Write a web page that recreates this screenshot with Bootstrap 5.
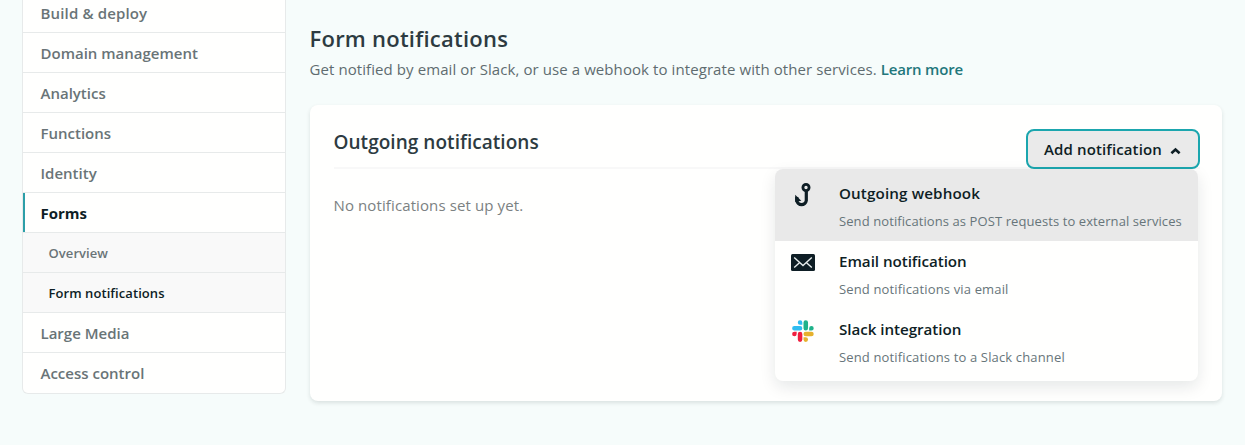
<!DOCTYPE html>
<html lang="en">
<head>
<meta charset="utf-8">
<meta name="viewport" content="width=device-width, initial-scale=1">
<title>Form notifications</title>
<link href="https://cdn.jsdelivr.net/npm/bootstrap@5.3.0/dist/css/bootstrap.min.css" rel="stylesheet">
<style>
body{background:#f6fcfb;font-family:"Open Sans","Noto Sans",sans-serif;font-size:15px;line-height:24px;color:#2d3b41;height:445px;overflow:hidden}
.side-nav{width:264px;height:394px;margin-left:22px;background:#fffffe;border:1px solid #e7eaea;border-top:0;border-radius:0 0 6px 6px;overflow:hidden}
.side-nav .nav-link{height:40px;padding:0 0 0 17.500px;line-height:41px;border-bottom:1px solid #e7eaea;color:#697477;font-weight:600}
.side-nav .nav-link:first-child{height:33px;line-height:26px;letter-spacing:.15px}
.side-nav .nav-link:last-child{border-bottom:0}
.side-nav .nav-link.active{color:#0e1e25;font-weight:700;box-shadow:inset 2px 0 #2c9fa8}
.side-nav .sub-link{background:#f9f9f9;padding-left:25.500px;font-size:13px;letter-spacing:.07px}
.side-nav .sub-link.current{color:#0e1e25}
.main-col{margin-left:24px;width:912px;padding-top:22px}
.page-title{font-size:22px;line-height:32px;font-weight:600;letter-spacing:.24px;margin:0 0 0 -.5px}
.page-text{color:#5f6c70;letter-spacing:.085px;margin:3px 0 24px -.5px}
.page-text a{color:#22777b;font-weight:600;letter-spacing:-.17px;text-decoration:none}
.panel{height:296px;padding:24px 22px 24px 24px;background:#fffffe;border-radius:8px;box-shadow:0 2px 4px rgba(14,30,37,.12)}
.panel-head{height:40px;border-bottom:2px solid #f8f8f8}
.panel-title{font-size:19px;line-height:26px;font-weight:600;letter-spacing:.04px;margin:0 0 0 -.5px}
.add-btn{width:174px;height:40px;background:#eaeaea!important;border:2px solid #1ba6ae!important;border-radius:8px;padding:0 17px 0 16px;font-size:15px;font-weight:600;letter-spacing:.13px;color:#0e1e25!important}
.empty-text{color:#7b8182;letter-spacing:.11px;margin:24px 0 0 -.5px}
.add-menu{width:423px;height:212px;top:40px;right:2px;border:0;border-radius:8px;padding:0;background:#fffffe;box-shadow:0 6px 16px rgba(14,30,37,.1);overflow:hidden}
.add-menu .dropdown-item{height:68px;padding:8px 0 0 16px;color:#0e1e25}
.add-menu .dropdown-item.hovered{height:72px;padding-top:12px;background:#e9e9e9}
.add-menu svg{flex:none;margin-top:1px}
.item-title{font-size:15.200px;font-weight:600;line-height:24px;letter-spacing:-.05px}
.hovered .item-title{letter-spacing:.13px}
.item-text{font-size:13px;line-height:32px;letter-spacing:.15px;color:#67757a}
.hovered .item-text{letter-spacing:.09px}
</style>
</head>
<body>
<div class="d-flex align-items-start">
  <nav class="side-nav nav flex-column flex-nowrap flex-shrink-0">
    <a class="nav-link">Build &amp; deploy</a>
    <a class="nav-link">Domain management</a>
    <a class="nav-link">Analytics</a>
    <a class="nav-link">Functions</a>
    <a class="nav-link">Identity</a>
    <a class="nav-link active">Forms</a>
    <a class="nav-link sub-link">Overview</a>
    <a class="nav-link sub-link current">Form notifications</a>
    <a class="nav-link">Large Media</a>
    <a class="nav-link">Access control</a>
  </nav>
  <main class="main-col flex-shrink-0">
    <h1 class="page-title">Form notifications</h1>
    <p class="page-text">Get notified by email or Slack, or use a webhook to integrate with other services. <a href="#">Learn more</a></p>
    <section class="panel">
      <div class="panel-head d-flex justify-content-between align-items-start">
        <h2 class="panel-title">Outgoing notifications</h2>
        <div class="dropdown">
          <button class="btn add-btn d-flex align-items-center justify-content-between" type="button"><span>Add notification</span>
            <svg width="11" height="8" viewBox="0 0 11 8" class="mt-1"><path d="M1.400 6.200 5.500 2.500 9.600 6.200" fill="none" stroke="#0e1e25" stroke-width="2.600"/></svg></button>
          <div class="dropdown-menu add-menu show">
            <a class="dropdown-item hovered d-flex gap-4" href="#">
              <svg width="24" height="27" viewBox="0 0 24 27"><circle cx="15" cy="5.500" r="3.100" fill="none" stroke="#0e1e25" stroke-width="2.800"/><path d="M15.300 8.500V18.500a4.800 4.800 0 0 1-9.500 0V15" fill="none" stroke="#0e1e25" stroke-width="3.200"/><path d="M4.200 12.800 10.300 18.700 4.200 20z" fill="#0e1e25"/></svg>
              <div><div class="item-title">Outgoing webhook</div><div class="item-text">Send notifications as POST requests to external services</div></div>
            </a>
            <a class="dropdown-item d-flex gap-4" href="#">
              <svg width="24" height="26" viewBox="0 0 24 26"><rect y="4" width="24" height="17" rx="1.500" fill="#0e1e25"/><path d="M3.200 7.500 12 15.500l8.800-8M3.200 17.500l5-4.500M20.800 17.500l-5-4.500" fill="none" stroke="#e8eeee" stroke-width="1.400"/></svg>
              <div><div class="item-title">Email notification</div><div class="item-text">Send notifications via email</div></div>
            </a>
            <a class="dropdown-item d-flex gap-4" href="#">
              <svg width="24" height="26" viewBox="0 0 24 26"><g transform="translate(1.100 2.600) scale(.172)"><path d="M26.500 77.600a13.200 13.200 0 1 1-13.200-13.200h13.200zM33.100 77.600a13.200 13.200 0 0 1 26.400 0v33a13.200 13.200 0 0 1-26.400 0z" fill="#f0203f"/><path d="M46.300 24.600a13.200 13.200 0 1 1 13.200-13.200v13.200zM46.300 31.200a13.200 13.200 0 0 1 0 26.400h-33a13.200 13.200 0 0 1 0-26.400z" fill="#2fbcf0"/><path d="M99.300 44.400a13.200 13.200 0 1 1 13.200 13.200H99.300zM92.700 44.400a13.200 13.200 0 0 1-26.400 0v-33a13.200 13.200 0 0 1 26.400 0z" fill="#1fb28a"/><path d="M79.500 97.400a13.200 13.200 0 1 1-13.200 13.200V97.400zM79.500 90.800a13.200 13.200 0 0 1 0-26.400h33a13.200 13.200 0 0 1 0 26.400z" fill="#e6b12d"/></g></svg>
              <div><div class="item-title">Slack integration</div><div class="item-text">Send notifications to a Slack channel</div></div>
            </a>
          </div>
        </div>
      </div>
      <p class="empty-text">No notifications set up yet.</p>
    </section>
  </main>
</div>
<script src="https://cdn.jsdelivr.net/npm/bootstrap@5.3.0/dist/js/bootstrap.bundle.min.js"></script>
</body>
</html>
